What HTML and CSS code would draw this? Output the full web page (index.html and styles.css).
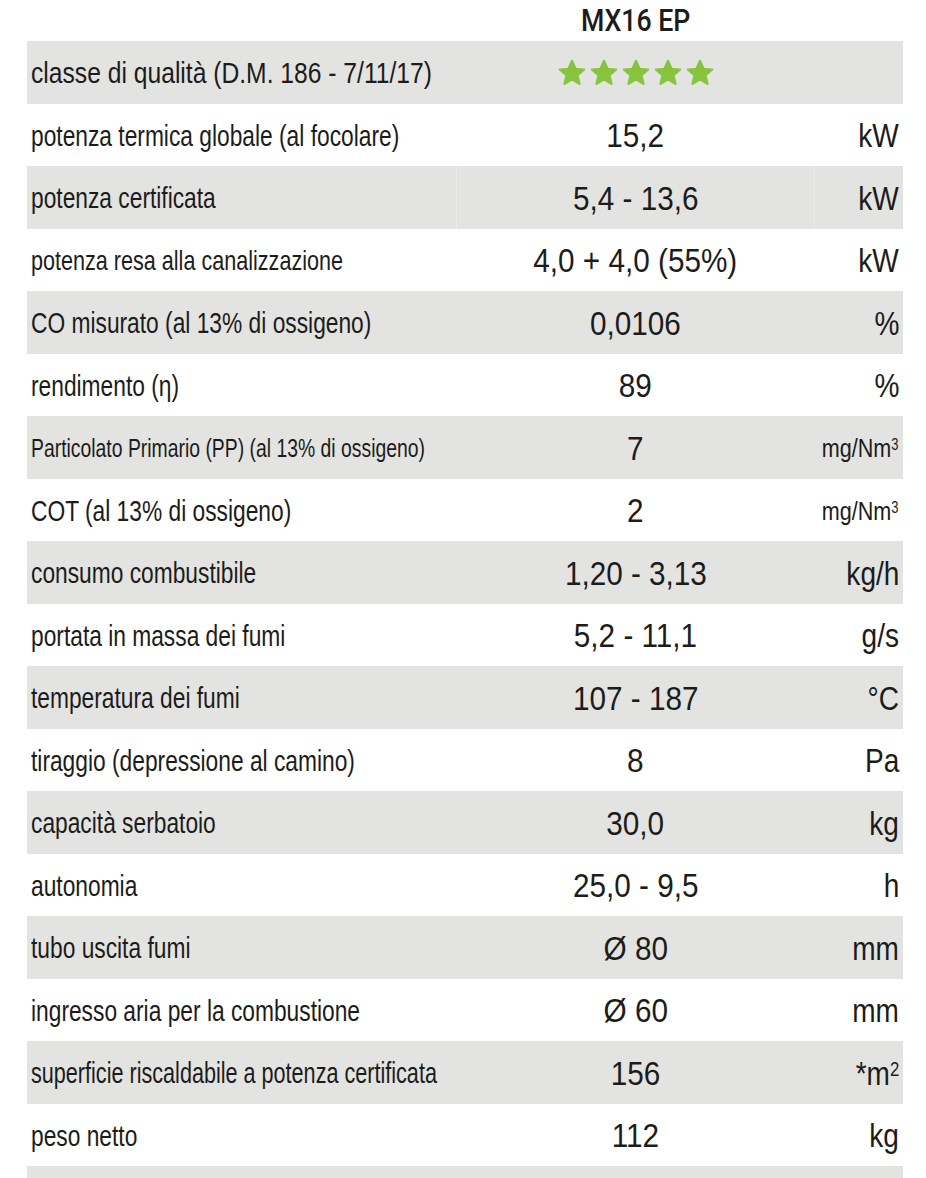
FILE: index.html
```html
<!DOCTYPE html>
<html lang="it">
<head>
<meta charset="utf-8">
<title>MX16 EP</title>
<link rel="stylesheet" href="styles.css">
</head>
<body>
<div class="sheet">
  <div class="head">
    <div></div>
    <div class="title"><span>MX16 EP</span></div>
    <div></div>
  </div>
  <div class="row alt">
    <div class="label wide"><span>classe di qualità (D.M. 186 - 7/11/17)</span></div>
    <div class="value stars">
      <svg class="star" viewBox="0 0 24 24"><path d="M12 2.2l2.8 6.4 6.9.6-5.3 4.6 1.6 6.8L12 17l-6 3.6 1.6-6.8-5.3-4.6 6.9-.6z"/></svg>
      <svg class="star" viewBox="0 0 24 24"><path d="M12 2.2l2.8 6.4 6.9.6-5.3 4.6 1.6 6.8L12 17l-6 3.6 1.6-6.8-5.3-4.6 6.9-.6z"/></svg>
      <svg class="star" viewBox="0 0 24 24"><path d="M12 2.2l2.8 6.4 6.9.6-5.3 4.6 1.6 6.8L12 17l-6 3.6 1.6-6.8-5.3-4.6 6.9-.6z"/></svg>
      <svg class="star" viewBox="0 0 24 24"><path d="M12 2.2l2.8 6.4 6.9.6-5.3 4.6 1.6 6.8L12 17l-6 3.6 1.6-6.8-5.3-4.6 6.9-.6z"/></svg>
      <svg class="star" viewBox="0 0 24 24"><path d="M12 2.2l2.8 6.4 6.9.6-5.3 4.6 1.6 6.8L12 17l-6 3.6 1.6-6.8-5.3-4.6 6.9-.6z"/></svg>
    </div>
    <div class="unit"></div>
  </div>
  <div class="row">
    <div class="label"><span>potenza termica globale (al focolare)</span></div>
    <div class="value"><span>15,2</span></div>
    <div class="unit"><span>kW</span></div>
  </div>
  <div class="row alt split">
    <div class="label"><span>potenza certificata</span></div>
    <div class="value"><span>5,4 - 13,6</span></div>
    <div class="unit"><span>kW</span></div>
  </div>
  <div class="row">
    <div class="label small"><span>potenza resa alla canalizzazione</span></div>
    <div class="value"><span>4,0 + 4,0 (55%)</span></div>
    <div class="unit"><span>kW</span></div>
  </div>
  <div class="row alt">
    <div class="label"><span>CO misurato (al 13% di ossigeno)</span></div>
    <div class="value"><span>0,0106</span></div>
    <div class="unit"><span>%</span></div>
  </div>
  <div class="row">
    <div class="label"><span>rendimento (η)</span></div>
    <div class="value"><span>89</span></div>
    <div class="unit"><span>%</span></div>
  </div>
  <div class="row alt">
    <div class="label narrow"><span>Particolato Primario (PP) (al 13% di ossigeno)</span></div>
    <div class="value"><span>7</span></div>
    <div class="unit sm"><span>mg/Nm<sup>3</sup></span></div>
  </div>
  <div class="row">
    <div class="label"><span>COT (al 13% di ossigeno)</span></div>
    <div class="value"><span>2</span></div>
    <div class="unit sm"><span>mg/Nm<sup>3</sup></span></div>
  </div>
  <div class="row alt">
    <div class="label"><span>consumo combustibile</span></div>
    <div class="value"><span>1,20 - 3,13</span></div>
    <div class="unit"><span>kg/h</span></div>
  </div>
  <div class="row">
    <div class="label"><span>portata in massa dei fumi</span></div>
    <div class="value"><span>5,2 - 11,1</span></div>
    <div class="unit"><span>g/s</span></div>
  </div>
  <div class="row alt">
    <div class="label"><span>temperatura dei fumi</span></div>
    <div class="value"><span>107 - 187</span></div>
    <div class="unit"><span>°C</span></div>
  </div>
  <div class="row">
    <div class="label"><span>tiraggio (depressione al camino)</span></div>
    <div class="value"><span>8</span></div>
    <div class="unit"><span>Pa</span></div>
  </div>
  <div class="row alt">
    <div class="label"><span>capacità serbatoio</span></div>
    <div class="value"><span>30,0</span></div>
    <div class="unit"><span>kg</span></div>
  </div>
  <div class="row">
    <div class="label"><span>autonomia</span></div>
    <div class="value"><span>25,0 - 9,5</span></div>
    <div class="unit"><span>h</span></div>
  </div>
  <div class="row alt">
    <div class="label"><span>tubo uscita fumi</span></div>
    <div class="value"><span>Ø 80</span></div>
    <div class="unit"><span>mm</span></div>
  </div>
  <div class="row">
    <div class="label"><span>ingresso aria per la combustione</span></div>
    <div class="value"><span>Ø 60</span></div>
    <div class="unit"><span>mm</span></div>
  </div>
  <div class="row alt">
    <div class="label tight"><span>superficie riscaldabile a potenza certificata</span></div>
    <div class="value"><span>156</span></div>
    <div class="unit"><span>*m<sup>2</sup></span></div>
  </div>
  <div class="row">
    <div class="label"><span>peso netto</span></div>
    <div class="value"><span>112</span></div>
    <div class="unit"><span>kg</span></div>
  </div>
  <div class="row alt end"></div>
</div>
</body>
</html>
```

FILE: styles.css
```css
html, body {
  margin: 0;
  padding: 0;
  background: #ffffff;
}

body {
  font-family: "Liberation Sans", Arial, sans-serif;
  color: #1c1c1a;
  overflow: hidden;
}

.sheet {
  width: 876px;
  margin-left: 27px;
}

.head,
.row {
  display: grid;
  grid-template-columns: 429px 359px 88px;
  align-items: center;
  box-sizing: border-box;
}

.head {
  height: 41px;
}

.title {
  text-align: center;
  font-family: Roboto, "Liberation Sans", sans-serif;
  font-weight: 500;
  font-size: 31px;
  line-height: 1;
}

.title span {
  display: inline-block;
  transform: scaleX(0.86);
  transform-origin: center;
  white-space: nowrap;
}

.row {
  height: 62.5px;
  padding-top: 3px;
}

.row.alt {
  background: #e3e3e2;
}

.row.end {
  height: 12px;
}

.row.split .value {
  border-left: 1px solid #ebebea;
  border-right: 1px solid #ebebea;
  align-self: stretch;
  display: flex;
  align-items: center;
  justify-content: center;
  margin-top: -3px;
  padding-top: 3px;
}

.label {
  padding-left: 4px;
  font-size: 29px;
  white-space: nowrap;
}

.label span {
  display: inline-block;
  transform: scaleX(0.785);
  transform-origin: left center;
}

.label.wide span {
  transform: scaleX(0.85);
}

.label.tight span {
  transform: scaleX(0.745);
}

.label.small {
  font-size: 27.5px;
}

.label.narrow {
  font-size: 26px;
}

.label.narrow span {
  transform: scaleX(0.745);
}

.value {
  text-align: center;
  font-size: 33px;
  white-space: nowrap;
}

.value span {
  display: inline-block;
  transform: scaleX(0.9);
  transform-origin: center;
}

.unit {
  display: flex;
  justify-content: flex-end;
  padding-right: 4px;
  font-size: 33px;
  white-space: nowrap;
}

.unit.sm {
  font-size: 26px;
  padding-right: 5px;
}

.unit span {
  display: inline-block;
  transform: scaleX(0.85);
  transform-origin: right center;
}

.unit.sm span {
  transform: scaleX(0.83);
}

.unit sup {
  font-size: 0.6em;
  vertical-align: 0.48em;
  line-height: 0;
}

.stars {
  display: flex;
  justify-content: center;
  gap: 2px;
  padding-bottom: 2px;
}

.star {
  width: 30px;
  height: 30px;
  fill: #86c440;
  stroke: #86c440;
  stroke-width: 1.8;
  stroke-linejoin: round;
}
```
